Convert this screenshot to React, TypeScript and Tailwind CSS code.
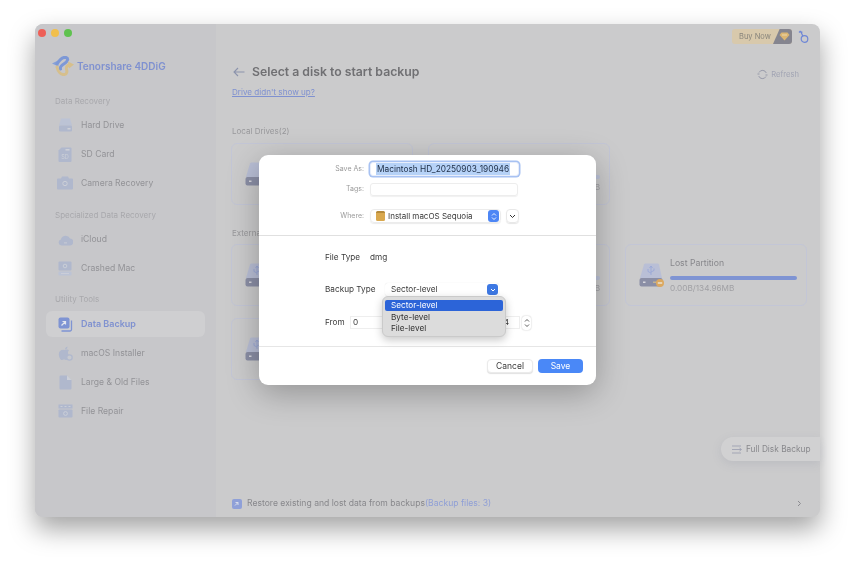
import React from "react";

const ic = "#b0b8cd";
const inner = "#cdd0d8";

function DriveIcon() {
  return (
    <svg width="15" height="14" viewBox="0 0 15 14">
      <path d="M3 0.500h9l2 7H1z" fill="#bcc3d5" />
      <rect x="1" y="7.500" width="13" height="6" rx="1.200" fill={ic} />
      <rect x="9.500" y="10" width="3" height="1.500" fill={inner} />
    </svg>
  );
}
function SdIcon() {
  return (
    <svg width="14" height="15" viewBox="0 0 14 15">
      <path d="M3.500 0.500h9a1 1 0 0 1 1 1v12.500a1 1 0 0 1-1 1H1.500a1 1 0 0 1-1-1V3.500z" fill={ic} />
      <rect x="7.500" y="2" width="4" height="1.600" fill={inner} />
      <text x="7" y="12" textAnchor="middle" fontSize="5.500" fontFamily="Inter, sans-serif" fill={inner}>SD</text>
    </svg>
  );
}
function CameraIcon() {
  return (
    <svg width="16" height="14" viewBox="0 0 16 14">
      <path d="M5 0.500h6l1 2h3a1 1 0 0 1 1 1v9a1 1 0 0 1-1 1H1a1 1 0 0 1-1-1v-9a1 1 0 0 1 1-1h3z" fill={ic} />
      <circle cx="8" cy="7.500" r="2.200" fill="none" stroke={inner} strokeWidth="1" />
    </svg>
  );
}
function CloudIcon() {
  return (
    <svg width="15" height="13" viewBox="0 0 15 13">
      <path d="M3.500 12.500a3 3 0 0 1-.6-5.900A4.800 4.800 0 0 1 12 5.500a3.500 3.500 0 0 1-.5 7z" fill={ic} />
      <rect x="6" y="9.500" width="3" height="0.800" fill={inner} />
    </svg>
  );
}
function CrashedIcon() {
  return (
    <svg width="14" height="15" viewBox="0 0 14 15">
      <rect x="0.500" y="0.500" width="13" height="9" rx="1" fill={ic} />
      <circle cx="7" cy="5" r="1.800" fill="none" stroke={inner} strokeWidth="0.900" />
      <rect x="0.500" y="10.500" width="13" height="4" rx="1" fill="#bcc3d5" />
      <rect x="3" y="12" width="8" height="0.900" fill={inner} />
    </svg>
  );
}
function BackupIcon() {
  return (
    <svg width="15" height="15" viewBox="0 0 15 15">
      <path d="M13.500 3.500v9a1.500 1.500 0 0 1-1.500 1.500H3.500" fill="none" stroke="#7f94d3" strokeWidth="1.300" />
      <rect x="0.500" y="0.500" width="11" height="11" rx="2" fill="#7f94d3" />
      <path d="M3.500 8.500l4-4M4.500 4.500h3v3" stroke="#e4e6ee" strokeWidth="1.200" fill="none" />
    </svg>
  );
}
function AppleIcon() {
  return (
    <svg width="15" height="15" viewBox="0 0 15 15">
      <path d="M7 4c1-.8 3-1 4 .5-1.800 1.500-1 4 .5 5-.8 2.500-2 4.500-3.200 4.500-1 0-1.300-.5-2.300-.5s-1.300.5-2.200.5C2.500 14 .8 11 .8 8.200.8 5 3.300 3.200 7 4z" fill={ic} />
      <path d="M7 3.500C7 2 8 .8 9.500.5 9.600 2 8.500 3.300 7 3.500z" fill={ic} />
      <circle cx="11.500" cy="11.500" r="2.700" fill="#c7c9cf" stroke={ic} strokeWidth="1.200" />
    </svg>
  );
}
function FileIcon() {
  return (
    <svg width="13" height="15" viewBox="0 0 13 15">
      <path d="M1.500 0.500h6.500l4.500 4.500v8.500a1 1 0 0 1-1 1h-10a1 1 0 0 1-1-1v-12a1 1 0 0 1 1-1z" fill={ic} />
      <path d="M8 .5v4.500h4.500z" fill={inner} />
    </svg>
  );
}
function RepairIcon() {
  return (
    <svg width="15" height="14" viewBox="0 0 15 14">
      <rect x="0.500" y="0.500" width="14" height="4" fill={ic} />
      <rect x="0.500" y="5.500" width="14" height="8" rx="0.800" fill={ic} />
      <path d="M2.500 2.500h2M6.500 2.500h2M10.500 2.500h2" stroke={inner} strokeWidth="0.900" />
      <circle cx="7.500" cy="9.500" r="1.900" fill="none" stroke={inner} strokeWidth="0.900" />
    </svg>
  );
}

function Logo() {
  return (
    <svg width="22" height="20" viewBox="0 0 22 20">
      <path d="M0 7.500L6 4.500L6.500 10.500z" fill="#86a0d8" />
      <path d="M5 8C8 3 11 .8 14 1.500C17 2.500 15.500 5.500 12.500 7.500C9.500 9.500 7.500 11 8.500 13" fill="none" stroke="#7d98d6" strokeWidth="3" strokeLinecap="round" />
      <path d="M5 11C6 16 9 19 12.500 18.500C15.500 18 15 15 14.500 13C14.200 11 15.500 9.500 17 9" fill="none" stroke="#d6bf8c" strokeWidth="3" strokeLinecap="round" />
      <path d="M16 5.500L22 8.500L17 12.500z" fill="#d6bf8c" />
    </svg>
  );
}

function Section({ label, top }: { label: string; top: string }) {
  return <div className={`pl-[20px] text-[8px] leading-[12px] text-[#a8a8ac] ${top}`}>{label}</div>;
}

function NavItem({ icon, label, active }: { icon: React.ReactNode; label: string; active?: boolean }) {
  return (
    <div className={`mx-[11px] h-[26px] mb-[3px] rounded-[6px] flex items-center pl-[11px] ${active ? "bg-[#cfcfd1]" : ""}`}>
      <div className="w-[16px] flex justify-center shrink-0">{icon}</div>
      <span className={`ml-[8px] ${active ? "text-[9px] font-semibold text-[#7f91d0]" : "text-[8.6px] text-[#939397]"}`}>{label}</span>
    </div>
  );
}

function DiskGlyph({ usb, badge }: { usb?: boolean; badge?: boolean }) {
  return (
    <svg width="25" height="25" viewBox="0 0 25 25" className="shrink-0">
      <path d="M5 1.500a1.500 1.500 0 0 1 1.400-1h12.200a1.500 1.500 0 0 1 1.400 1L23 15H1z" fill="#b9bfd6" />
      <rect x="0.500" y="15" width="23" height="8.500" rx="2" fill="#8b8fa6" />
      <rect x="4" y="18.500" width="2.500" height="1.500" fill="#d8d8de" />
      <rect x="14" y="18.500" width="4" height="1.500" fill="#c4b490" />
      {usb && <path d="M12 3v9M12 3l-1.500 2M12 3l1.500 2M9 6v2.500l3 1.500M15 5.500v2l-3 1.500" stroke="#9aa8d8" strokeWidth="0.900" fill="none" />}
      {badge && (
        <>
          <circle cx="21" cy="20" r="4" fill="#dba85f" />
          <rect x="18.800" y="19.300" width="4.400" height="1.400" fill="#ece6da" />
        </>
      )}
    </svg>
  );
}

function DiskCard({ name, size, usb, badge, faint }: { name?: string; size?: string; usb?: boolean; badge?: boolean; faint?: boolean }) {
  return (
    <div className="w-[182px] h-[62px] rounded-[6px] border border-[#c3c6d6] flex items-center pl-[13px] pr-[9px] gap-[6px] shrink-0">
      <DiskGlyph usb={usb} badge={badge} />
      <div className="flex-1 flex flex-col">
        <div className="h-[12px] text-[8.7px] leading-[12px] text-[#87878b]">{name}</div>
        <div className={`h-[4px] mt-[7px] mb-[3px] rounded-full ${faint ? "bg-[#bcc3da]" : "bg-[#7f94d3]"}`} />
        <div className={`h-[11px] text-[8.2px] leading-[11px] text-[#a0a0a4] ${faint ? "text-right" : ""}`}>{size}</div>
      </div>
    </div>
  );
}

function SaveDialog() {
  const label = "w-[105px] text-right text-[7px] text-[#9a9a9a] shrink-0";
  return (
    <div className="absolute left-[224px] top-[131px] w-[337px] h-[230px] bg-white rounded-[9px] shadow-[0_8px_32px_rgba(0,0,0,0.28)] flex flex-col text-[#3a3a3a]">
      <div className="h-[81px] pt-[7px] shrink-0 border-b border-[#e0e0e0]">
        <div className="flex items-center h-[14px]">
          <div className={label}>Save As:</div>
          <div className="ml-[6px] w-[149px] h-[14px] rounded-[3px] bg-white border border-[#e8eefb] shadow-[0_0_0_1.500px_#a8c2f2] flex items-center pl-[5px]">
            <span className="bg-[#b6d2f7] text-[8.3px] leading-[12px] text-[#22324a] px-[1px] whitespace-nowrap">Macintosh HD_20250903_190946</span>
          </div>
        </div>
        <div className="flex items-center h-[13px] mt-[7px]">
          <div className={label}>Tags:</div>
          <div className="ml-[6px] w-[148px] h-[13px] rounded-[3px] border border-[#ededed] shadow-[0_1px_1px_rgba(0,0,0,0.06)]" />
        </div>
        <div className="flex items-center h-[14px] mt-[13px]">
          <div className={label}>Where:</div>
          <div className="ml-[6px] w-[131px] h-[14px] rounded-[4px] border border-[#ececec] shadow-[0_1px_1px_rgba(0,0,0,0.08)] flex items-center pl-[5px] pr-[1px]">
            <span className="w-[9px] h-[10px] rounded-[1.500px] bg-[#d9a84e] border-t-[2px] border-[#b48a3c] shrink-0" />
            <span className="ml-[3px] text-[8px] text-[#3a3a3a] whitespace-nowrap">Install macOS Sequoia</span>
            <span className="ml-auto w-[11px] h-[12px] rounded-[3px] bg-[#4d86f5] flex items-center justify-center">
              <svg width="6" height="9" viewBox="0 0 6 9"><path d="M1 3.500l2-2 2 2M1 5.500l2 2 2-2" stroke="#fff" strokeWidth="0.900" fill="none" /></svg>
            </span>
          </div>
          <div className="ml-[5px] w-[13px] h-[14px] rounded-[4px] border border-[#e8e8e8] shadow-[0_1px_1px_rgba(0,0,0,0.1)] flex items-center justify-center">
            <svg width="7" height="5" viewBox="0 0 7 5"><path d="M1 1l2.500 2.500L6 1" stroke="#333" strokeWidth="1" fill="none" /></svg>
          </div>
        </div>
      </div>
      <div className="relative h-[111px] shrink-0 border-b border-[#e6e6e6] pl-[66px] text-[8.2px]">
        <div className="flex items-center h-[13px] mt-[15px]">
          <span className="w-[45px]">File Type</span>
          <span>dmg</span>
        </div>
        <div className="flex items-center h-[13px] mt-[19px]">
          <span className="w-[60px]">Backup Type</span>
          <div className="w-[114px] h-[13px] rounded-[3px] bg-white shadow-[0_0_1px_rgba(0,0,0,0.15)] flex items-center pl-[6px] pr-[1px]">
            <span>Sector-level</span>
            <span className="ml-auto w-[11px] h-[11px] rounded-[3px] bg-[#3d78e3] flex items-center justify-center">
              <svg width="6" height="4" viewBox="0 0 6 4"><path d="M1 1l2 2 2-2" stroke="#fff" strokeWidth="1" fill="none" /></svg>
            </span>
          </div>
        </div>
        <div className="flex items-center h-[13px] mt-[20px]">
          <span className="w-[25px]">From</span>
          <div className="w-[170px] h-[13px] border border-[#eeeeee] flex items-center justify-between pl-[2px] pr-[10px]">
            <span>0</span>
            <span>4</span>
          </div>
          <div className="ml-[2px] w-[9px] h-[14px] rounded-[3px] shadow-[0_0_1.500px_rgba(0,0,0,0.3)] flex items-center justify-center">
            <svg width="6" height="10" viewBox="0 0 6 10"><path d="M1 3.500l2-2 2 2M1 6.500l2 2 2-2" stroke="#333" strokeWidth="0.800" fill="none" /></svg>
          </div>
        </div>
        <div className="absolute left-[123px] top-[60px] w-[124px] h-[41px] rounded-[6px] bg-[#dcdcdc] border border-[#cacaca] shadow-[0_3px_9px_rgba(0,0,0,0.22)] px-[2px] pt-[3px] text-[#303030]">
          <div className="h-[11px] rounded-[2px] bg-[#2c64d8] text-white pl-[6px] flex items-center">Sector-level</div>
          <div className="h-[11.500px] pl-[6px] flex items-center">Byte-level</div>
          <div className="h-[11.500px] pl-[6px] flex items-center">File-level</div>
        </div>
      </div>
      <div className="flex-1 flex items-start justify-end pt-[12px] pr-[13px] gap-[5px] text-[8.500px]">
        <div className="w-[46px] h-[14px] rounded-[4px] bg-white border border-[#ebebeb] shadow-[0_1px_1px_rgba(0,0,0,0.12)] flex items-center justify-center">Cancel</div>
        <div className="w-[45px] h-[14px] rounded-[4px] bg-[#4a88f7] text-white flex items-center justify-center">Save</div>
      </div>
    </div>
  );
}

export default function App() {
  return (
    <div className="w-[855px] h-[564px] bg-white overflow-hidden pt-[24px] pl-[35px]" style={{ fontFamily: "Inter, 'Liberation Sans', sans-serif" }}>
      <div className="relative w-[785px] h-[493px] rounded-[8px] flex bg-[#cbcbcc] shadow-[0_12px_26px_rgba(0,0,0,0.36)] blur-[0.4px]">
        <aside className="w-[181px] h-full bg-[#c7c7ca] rounded-l-[8px] shrink-0 flex flex-col">
          <div className="flex gap-[5px] pl-[3px] pt-[5px] h-[20px]">
            <span className="w-[8px] h-[8px] rounded-full bg-[#ee5f57]" />
            <span className="w-[8px] h-[8px] rounded-full bg-[#f1bf4c]" />
            <span className="w-[8px] h-[8px] rounded-full bg-[#5fc24f]" />
          </div>
          <div className="flex items-center pl-[17px] mt-[11px] h-[22px]">
            <Logo />
            <span className="ml-[3px] text-[10px] font-semibold text-[#7f91d0] whitespace-nowrap">Tenorshare 4DDiG</span>
          </div>
          <Section label="Data Recovery" top="mt-[18px]" />
          <div className="mt-[5px]">
            <NavItem icon={<DriveIcon />} label="Hard Drive" />
            <NavItem icon={<SdIcon />} label="SD Card" />
            <NavItem icon={<CameraIcon />} label="Camera Recovery" />
          </div>
          <Section label="Specialized Data Recovery" top="mt-[10px]" />
          <div className="mt-[5px]">
            <NavItem icon={<CloudIcon />} label="iCloud" />
            <NavItem icon={<CrashedIcon />} label="Crashed Mac" />
          </div>
          <Section label="Utility Tools" top="mt-[9px]" />
          <div className="mt-[6px]">
            <NavItem icon={<BackupIcon />} label="Data Backup" active />
            <NavItem icon={<AppleIcon />} label="macOS Installer" />
            <NavItem icon={<FileIcon />} label="Large & Old Files" />
            <NavItem icon={<RepairIcon />} label="File Repair" />
          </div>
        </aside>

        <main className="flex-1 flex flex-col min-w-0">
          <div className="flex justify-end items-center pt-[5px] pr-[11px] h-[20px]">
            <div className="w-[60px] h-[15px] rounded-[3px] bg-[#d8c9ac] flex items-center overflow-hidden">
              <span className="pl-[7px] text-[7.5px] text-[#88857c] whitespace-nowrap">Buy Now</span>
              <span className="ml-auto w-[19px] h-full bg-[#85858f] flex items-center justify-center [clip-path:polygon(35%_0,100%_0,100%_100%,0_100%)]">
                <svg width="11" height="9" viewBox="0 0 11 9" className="ml-[3px]"><path d="M2.500 0.500h6L10.500 3 5.500 8.500.5 3z" fill="#dcb672" /><path d="M3 3h5" stroke="#f0e0bd" strokeWidth="0.800" /></svg>
              </span>
            </div>
            <svg width="11" height="14" viewBox="0 0 11 14" className="ml-[6px]">
              <circle cx="6.500" cy="9" r="3.300" fill="none" stroke="#6f87d6" strokeWidth="1.200" />
              <path d="M4.800 6L2.500 1M2.500 1L1 2.500M3 2.500L4.500 2" fill="none" stroke="#6f87d6" strokeWidth="1.200" />
            </svg>
          </div>

          <div className="flex items-center pl-[17px] pr-[21px] mt-[19px] h-[18px]">
            <svg width="12" height="10" viewBox="0 0 12 10"><path d="M11.500 5H1M5 1L1 5l4 4" fill="none" stroke="#8b93ac" strokeWidth="1.100" /></svg>
            <h1 className="ml-[7px] text-[12.25px] font-semibold text-[#707073] whitespace-nowrap">Select a disk to start backup</h1>
            <div className="ml-auto mt-[6px] flex items-center gap-[3px] text-[7.6px] text-[#a1a4b3]">
              <svg width="11" height="11" viewBox="0 0 11 11"><path d="M2 3.500A4 4 0 0 1 9.300 4M9 7.500A4 4 0 0 1 1.700 7" fill="none" stroke="#9295a6" strokeWidth="0.900" /><path d="M0.500 5h2M8.500 6h2" stroke="#9295a6" strokeWidth="0.900" /></svg>
              <span>Refresh</span>
            </div>
          </div>
          <div className="pl-[16px] mt-[5px] h-[12px] text-[8.1px] leading-[12px] text-[#7f91d0] underline">Drive didn't show up?</div>

          <div className="pl-[16px] mt-[27px] h-[12px] text-[8px] leading-[12px] text-[#98989b]">Local Drives(2)</div>
          <div className="flex gap-[15px] pl-[15px] mt-[6px]">
            <DiskCard />
            <DiskCard size="494.38GB" faint />
          </div>

          <div className="pl-[16px] mt-[22px] h-[12px] text-[8px] leading-[12px] text-[#98989b]">External Drives(4)</div>
          <div className="flex gap-[15px] pl-[15px] mt-[5px]">
            <DiskCard usb />
            <DiskCard size="32.00GB" usb faint />
            <DiskCard name="Lost Partition" size="0.00B/134.96MB" usb badge />
          </div>
          <div className="flex gap-[15px] pl-[15px] mt-[12px]">
            <DiskCard usb />
          </div>

          <div className="mt-auto h-[27px] flex items-center pl-[16px] pr-[18px] text-[8.6px] text-[#88888c]">
            <svg width="10" height="10" viewBox="0 0 10 10"><rect width="10" height="10" rx="2" fill="#8fa0d8" /><path d="M3 6.500l3-3M3.500 3.500H6V6" stroke="#dfe2ec" strokeWidth="0.900" fill="none" /></svg>
            <span className="ml-[5px] whitespace-nowrap">Restore existing and lost data from backups</span>
            <span className="text-[#8f9fd6] whitespace-nowrap">(Backup files: 3)</span>
            <svg width="5" height="7" viewBox="0 0 5 7" className="ml-auto"><path d="M1 1l2.500 2.500L1 6" stroke="#8b8b90" strokeWidth="1" fill="none" /></svg>
          </div>
        </main>

        <div className="absolute right-0 top-[413px] w-[99px] h-[24px] rounded-l-full bg-[#d1d1d2] shadow-[0_3px_10px_rgba(120,125,150,0.18)] flex items-center pl-[11px]">
          <svg width="10" height="9" viewBox="0 0 10 9"><path d="M0 1h9M0 4.500h9M0 8h9M7.500 3l2 1.500-2 1.500" stroke="#9ea1b2" strokeWidth="0.900" fill="none" /></svg>
          <span className="ml-[4px] text-[8.3px] text-[#88888c] whitespace-nowrap">Full Disk Backup</span>
        </div>

        <SaveDialog />
      </div>
    </div>
  );
}
